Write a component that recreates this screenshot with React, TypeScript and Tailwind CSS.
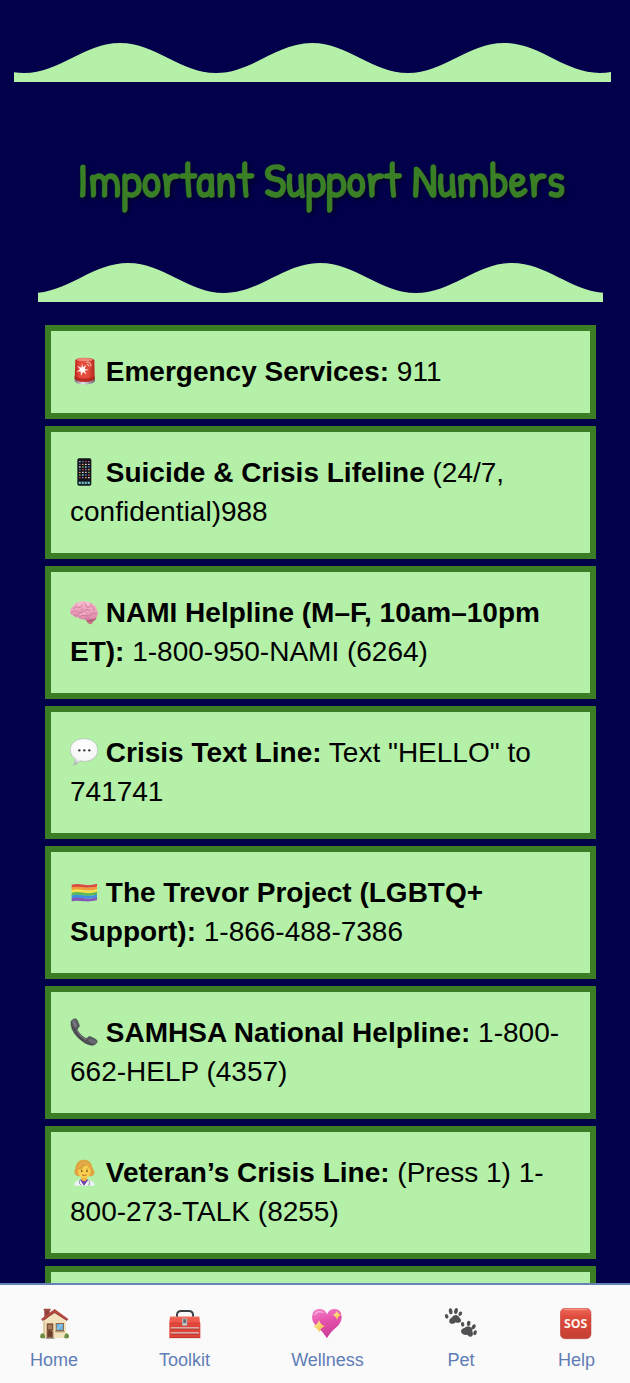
import type { ReactNode } from "react";

const WAVE_HALF = 96;

/* A row of rolling hills; `start` is the x of the first trough. */
function Wave({ start, width }: { start: number; width: number }) {
  let d = `M${start} 30`;
  let x = start;
  let up = true;
  while (x < width) {
    const from = up ? 30 : 0;
    const to = up ? 0 : 30;
    d += ` C${x + 36} ${from} ${x + WAVE_HALF - 36} ${to} ${x + WAVE_HALF} ${to}`;
    x += WAVE_HALF;
    up = !up;
  }
  d += ` V39 H${start} Z`;
  return (
    <svg viewBox={`0 0 ${width} 39`} preserveAspectRatio="none" className="block h-[39px] w-full" aria-hidden="true">
      <path d={d} fill="#b4f0a8" />
    </svg>
  );
}

function CardIcon({ children }: { children: ReactNode }) {
  return (
    <svg viewBox="0 0 84 84" className="inline-block h-7 w-7 align-[-4px]" aria-hidden="true">
      {children}
    </svg>
  );
}

const Siren = () => (
  <CardIcon>
    <defs>
      <linearGradient id="siren" x1="0" x2="1">
        <stop offset="0" stopColor="#b8231b" />
        <stop offset=".25" stopColor="#e8483b" />
        <stop offset=".7" stopColor="#e14a38" />
        <stop offset="1" stopColor="#b5251c" />
      </linearGradient>
      <linearGradient id="sirenBase" x1="0" x2="1">
        <stop offset="0" stopColor="#77747c" />
        <stop offset=".4" stopColor="#e4e2e6" />
        <stop offset="1" stopColor="#6d6a72" />
      </linearGradient>
    </defs>
    <path d="M14 64 Q44 76 75 64 V73 Q68 83 44 83 Q20 83 14 73Z" fill="url(#sirenBase)" />
    <path d="M16 10 Q17 2 44 2 Q71 2 73 10 L74 64 Q68 74 44 74 Q20 74 14 64Z" fill="url(#siren)" />
    <ellipse cx="44" cy="8" rx="24" ry="5" fill="#ee8a7b" />
    <path d="M14 58 Q44 72 74 58 V65 Q68 75 44 75 Q20 75 14 65Z" fill="#a81e1b" opacity=".7" />
    <path d="M36 18 L39 31 L49 23 L44 35 L57 39 L44 41 L50 53 L39 45 L33 57 L32 43 L19 44 L30 37 L21 26 L34 32Z" fill="#fff0ea" />
    <path d="M49 15 Q63 14 63 28 M51 22 Q57 22 57 28" stroke="#ffd5cc" strokeWidth="3" fill="none" />
    <circle cx="37" cy="38" r="7" fill="#fff" opacity=".7" />
  </CardIcon>
);

const APP_COLORS = ["#8fd4ef", "#e8e8ea", "#c34b52", "#6fb36b", "#e5a24a", "#5577c9", "#d8d2c4", "#9b6fb8"];

const Mobile = () => (
  <CardIcon>
    <rect x="22" y="1" width="42" height="82" rx="5" fill="#14141a" />
    {Array.from({ length: 28 }, (_, i) => (
      <rect
        key={i}
        x={27 + (i % 4) * 9}
        y={9 + Math.floor(i / 4) * 8}
        width="5"
        height="4"
        rx="1.5"
        fill={APP_COLORS[(i * 5 + Math.floor(i / 4) * 3) % 8]}
      />
    ))}
    <rect x="25" y="70" width="36" height="9" rx="2" fill="#28505f" />
    {[27, 36, 45, 54].map((x) => (
      <rect key={x} x={x} y="72" width="5" height="5" rx="1.5" fill="#8fe0da" />
    ))}
  </CardIcon>
);

const Brain = () => (
  <CardIcon>
    <defs>
      <linearGradient id="brain" x1="0" y1="0" x2="0" y2="1">
        <stop offset="0" stopColor="#f9bdd0" />
        <stop offset="1" stopColor="#de87a8" />
      </linearGradient>
    </defs>
    <path d="M48 66 Q54 80 63 79 Q70 76 68 66Z" fill="#c77a86" />
    <path d="M45 60 Q48 74 64 72 Q80 68 79 56Z" fill="#b8607f" />
    <path
      d="M1 44 Q0 31 9 25 Q13 14 27 13 Q37 6 49 11 Q62 10 69 19 Q79 23 80 35 Q87 45 81 55 Q75 66 64 62 Q53 69 43 64 Q31 67 26 58 Q13 60 11 53 Q2 51 1 44Z"
      fill="url(#brain)"
    />
    <path
      d="M10 31 Q18 23 27 28 Q35 30 37 20 M5 43 Q16 34 24 43 Q34 48 43 38 Q50 31 59 37 M27 58 Q34 48 46 53 Q57 57 65 49 Q72 42 79 46 M42 14 Q49 17 48 26 Q54 31 63 25 M62 16 Q60 22 68 26 Q75 30 71 37 M20 17 Q22 22 18 25 M13 52 Q18 47 25 51 M44 63 Q53 61 58 62 M39 31 Q32 33 33 39"
      stroke="#c4698e"
      strokeWidth="2"
      strokeLinecap="round"
      fill="none"
    />
    <path d="M14 23 Q20 17 28 19 M51 16 Q57 16 60 20 M30 51 Q39 46 47 48" stroke="#fbd3df" strokeWidth="2" fill="none" />
  </CardIcon>
);

const Speech = () => (
  <CardIcon>
    <defs>
      <radialGradient id="speech" cx=".5" cy=".3" r=".7">
        <stop offset="0" stopColor="#fff" />
        <stop offset=".75" stopColor="#f6f6f8" />
        <stop offset="1" stopColor="#b4b4be" />
      </radialGradient>
    </defs>
    <path
      d="M42 2 C66 2 83 16 83 36 C83 57 66 70 43 70 Q36 70 30 68 Q23 79 9 82 Q17 74 16 62 Q1 53 1 36 C1 16 18 2 42 2Z"
      fill="url(#speech)"
      stroke="#a9acb0"
      strokeWidth="1.5"
    />
    <g fill="#33333a">
      <circle cx="28" cy="37" r="3.5" />
      <circle cx="43" cy="37" r="3.5" />
      <circle cx="58" cy="37" r="3.5" />
    </g>
  </CardIcon>
);

const FLAG = ["#dc4b42", "#f09a3e", "#f7e04d", "#5cb85c", "#3f8fe0", "#8458b8"];

const Flag = () => (
  <CardIcon>
    {FLAG.map((color, i) => {
      const y = 20 + i * 8.2;
      return (
        <path
          key={color}
          d={`M5 ${y} C19 ${y - 4} 29 ${y - 2} 43 ${y} S69 ${y} 81 ${y - 3} v9 C69 ${y + 9} 56 ${y + 10} 43 ${y + 9} S19 ${y + 5} 5 ${y + 9}Z`}
          fill={color}
        />
      );
    })}
  </CardIcon>
);

const Receiver = () => (
  <CardIcon>
    <defs>
      <linearGradient id="receiver" x1="0" y1="1" x2="1" y2="0">
        <stop offset="0" stopColor="#2e2f34" />
        <stop offset=".55" stopColor="#5e5f66" />
        <stop offset="1" stopColor="#85868d" />
      </linearGradient>
    </defs>
    <path
      d="M3 10 Q8 2 16 2 Q20 2 23 9 L28 22 Q29 27 24 30 Q20 33 23 38 Q32 53 45 60 Q50 63 53 59 Q57 54 62 56 L77 64 Q84 68 81 73 Q76 83 64 82 Q44 79 23 58 Q0 34 3 10Z"
      fill="url(#receiver)"
      stroke="#35363b"
      strokeWidth="1.5"
    />
    <path d="M19 35 Q29 55 48 66" stroke="#8a8b92" strokeWidth="2.5" fill="none" />
    <ellipse cx="14" cy="18" rx="5" ry="12" transform="rotate(-22 14 18)" fill="#77787f" />
    <ellipse cx="66" cy="70" rx="12" ry="5" transform="rotate(22 66 70)" fill="#6a6b72" />
  </CardIcon>
);

const Doctor = () => (
  <CardIcon>
    <path d="M22 55 Q10 48 14 36 Q17 27 18 22 Q24 4 43 5 Q63 6 66 25 Q68 31 73 40 Q76 50 65 55Z" fill="#dda441" />
    <path d="M12 83 Q13 70 27 66 L42 63 L58 66 Q73 70 74 83Z" fill="#eef1f5" />
    <path d="M30 65 L42 83 L55 65 Q42 59 30 65Z" fill="#6b3fa8" />
    <path d="M34 52 H51 V65 Q42 74 34 65Z" fill="#eeb23c" />
    <ellipse cx="43" cy="38" rx="19" ry="23" fill="#fbcf4e" />
    <path d="M22 38 Q20 16 42 10 Q64 12 64 38 Q56 29 48 20 Q38 30 22 38Z" fill="#e3aa48" />
    <path d="M48 19 Q38 27 25 33" stroke="#c98e34" strokeWidth="2" fill="none" />
    <circle cx="35" cy="39" r="2.6" fill="#4b3322" />
    <circle cx="51" cy="39" r="2.6" fill="#4b3322" />
    <path d="M31 34 Q35 32 38 34 M48 34 Q52 32 55 34" stroke="#9a6a2b" strokeWidth="1.6" fill="none" />
    <path d="M37 51 Q43 55 49 51" stroke="#b04a35" strokeWidth="2.6" fill="none" strokeLinecap="round" />
    <path d="M28 67 Q26 78 34 82 M56 67 Q62 73 57 80" stroke="#76808e" strokeWidth="2.4" fill="none" />
    <circle cx="57" cy="80" r="2.5" fill="#a8b0ba" />
  </CardIcon>
);

function NavIcon({ children }: { children: ReactNode }) {
  return (
    <svg viewBox="0 0 96 96" className="block h-8 w-8" aria-hidden="true">
      {children}
    </svg>
  );
}

const House = () => (
  <NavIcon>
    <rect x="19" y="4" width="16" height="34" fill="#8e403a" />
    <rect x="17" y="2" width="21" height="6" rx="1" fill="#a34c44" />
    <path d="M16 40 L50 10 L84 40 V90 H16Z" fill="#f3e3bd" />
    <path d="M16 40 L21 36 V90 H16Z" fill="#d9c59a" />
    <path d="M50 3 L91 33 L87 38 L50 14 L13 38 L9 33Z" fill="#b54a42" />
    <path d="M13 38 L50 14 L87 38" stroke="#7f2d2b" strokeWidth="2" fill="none" />
    <rect x="26" y="46" width="20" height="45" fill="#84553a" />
    <rect x="30" y="51" width="12" height="12" fill="#a5795a" />
    <path d="M30 68 h12 v18 h-12Z" fill="#6b412c" />
    <circle cx="43" cy="69" r="1.6" fill="#efcf7a" />
    <rect x="53" y="45" width="25" height="25" fill="#8a6a4e" />
    <rect x="56" y="48" width="19" height="18" fill="#6fb1dd" />
    <path d="M57 64 L71 49" stroke="#b8dcf2" strokeWidth="3" />
    <rect x="51" y="69" width="29" height="4" fill="#b59a75" />
    <path d="M6 88 Q7 76 14 76 Q22 78 21 90 Q11 93 6 88Z M79 90 Q78 78 86 76 Q94 78 93 88 Q90 93 79 90Z" fill="#6f8e45" />
    <rect x="23" y="89" width="26" height="4" fill="#a3a09a" />
  </NavIcon>
);

const Toolbox = () => (
  <NavIcon>
    <path d="M24 27 V20 Q25 9 36 9 H60 Q71 9 72 20 V27" stroke="#3c4145" strokeWidth="6" fill="none" />
    <path d="M3 26 H91 L93 46 H1Z" fill="#ee5a4c" />
    <rect x="1" y="43" width="93" height="47" rx="2" fill="#df4538" />
    <path d="M3 27 H91" stroke="#f58a7b" strokeWidth="2.5" />
    <rect x="5" y="58" width="85" height="4" fill="#dedbdb" />
    <rect x="5" y="62" width="85" height="2" fill="#97312b" />
    <rect x="5" y="73" width="85" height="4" fill="#dedbdb" />
    <rect x="5" y="77" width="85" height="2" fill="#97312b" />
    <rect x="39" y="31" width="16" height="22" rx="2" fill="#aeb0b2" />
    <rect x="43" y="34" width="8" height="10" rx="1" fill="#65696d" />
    <path d="M42 49 h10" stroke="#ededee" strokeWidth="2" />
    <path d="M1 89 H94" stroke="#a72c25" strokeWidth="2" />
  </NavIcon>
);

const Heart = () => (
  <NavIcon>
    <defs>
      <linearGradient id="heart" x1=".3" y1="0" x2=".6" y2="1">
        <stop offset="0" stopColor="#f27cc4" />
        <stop offset=".4" stopColor="#e653ae" />
        <stop offset="1" stopColor="#c83a94" />
      </linearGradient>
      <linearGradient id="star" x1="0" y1="0" x2="1" y2="1">
        <stop offset="0" stopColor="#fff0a0" />
        <stop offset="1" stopColor="#f0b93a" />
      </linearGradient>
    </defs>
    <path d="M48 91 Q38 73 19 57 Q3 43 3 26 Q4 4 25 3 Q42 3 48 19 Q54 3 71 3 Q91 4 92 26 Q92 43 77 57 Q57 73 48 91Z" fill="url(#heart)" />
    <path d="M9 25 Q11 9 25 8 Q35 8 40 16 Q25 10 17 17 Q11 22 9 25Z" fill="#f9b4de" opacity=".8" />
    <path d="M78 7 Q80 18 91 21 Q80 24 78 37 Q75 24 65 21 Q75 18 78 7Z" fill="url(#star)" />
    <path d="M24 36 Q28 51 42 55 Q28 59 24 74 Q20 59 5 55 Q20 51 24 36Z" fill="url(#star)" />
  </NavIcon>
);

const Paws = () => (
  <NavIcon>
    <g fill="#505052">
      <path d="M13 43 Q11 33 20 29 Q24 20 34 21 Q42 23 45 31 Q52 39 45 43 Q38 46 32 43 Q26 49 18 47 Q14 46 13 43Z" />
      <ellipse cx="5" cy="25" rx="5" ry="7" transform="rotate(-22 5 25)" />
      <ellipse cx="17" cy="10" rx="5.5" ry="9" transform="rotate(-8 17 10)" />
      <ellipse cx="33" cy="9" rx="5.5" ry="9" transform="rotate(12 33 9)" />
      <ellipse cx="46" cy="17" rx="5" ry="7" transform="rotate(32 46 17)" />
      <path d="M48 70 Q48 63 58 60 Q67 52 76 57 Q84 61 82 69 Q87 84 78 86 Q72 88 67 80 Q59 82 53 78 Q48 75 48 70Z" />
      <ellipse cx="53" cy="49" rx="5" ry="7" transform="rotate(-12 53 49)" />
      <ellipse cx="71" cy="46" rx="5.5" ry="8" transform="rotate(10 71 46)" />
      <ellipse cx="86" cy="56" rx="5.5" ry="8" transform="rotate(34 86 56)" />
      <ellipse cx="90" cy="74" rx="5" ry="7.5" transform="rotate(18 90 74)" />
    </g>
  </NavIcon>
);

const Sos = () => (
  <NavIcon>
    <defs>
      <linearGradient id="sos" x1="0" y1="0" x2="0" y2="1">
        <stop offset="0" stopColor="#f0685a" />
        <stop offset=".3" stopColor="#dd4b3c" />
        <stop offset="1" stopColor="#c43f33" />
      </linearGradient>
    </defs>
    <rect x="1" y="1" width="92" height="91" rx="14" fill="url(#sos)" stroke="#b8392e" strokeWidth="1.5" />
    <path d="M14 4 H80" stroke="#f7a095" strokeWidth="3" strokeLinecap="round" />
    <text x="47" y="60" textAnchor="middle" fontFamily="Open Sans, sans-serif" fontWeight="700" fontSize="37" fill="#fff3ee">
      SOS
    </text>
  </NavIcon>
);

const contacts = [
  { icon: <Siren />, name: "Emergency Services:", detail: "911" },
  { icon: <Mobile />, name: "Suicide & Crisis Lifeline", detail: "(24/7, confidential)988" },
  { icon: <Brain />, name: "NAMI Helpline (M–F, 10am–10pm ET):", detail: "1-800-950-NAMI (6264)" },
  { icon: <Speech />, name: "Crisis Text Line:", detail: 'Text "HELLO" to 741741' },
  { icon: <Flag />, name: "The Trevor Project (LGBTQ+ Support):", detail: "1-866-488-7386" },
  { icon: <Receiver />, name: "SAMHSA National Helpline:", detail: "1-800-662-HELP (4357)" },
  { icon: <Doctor />, name: "Veteran’s Crisis Line:", detail: "(Press 1) 1-800-273-TALK (8255)" },
];

const tabs = [
  { icon: <House />, label: "Home" },
  { icon: <Toolbox />, label: "Toolkit" },
  { icon: <Heart />, label: "Wellness" },
  { icon: <Paws />, label: "Pet" },
  { icon: <Sos />, label: "Help" },
];

const card = "border-6 border-[#3a7d24] bg-[#b4f0a8] px-[19px] pt-[21px] pb-[22px]";

export default function App() {
  return (
    <div className="flex h-dvh flex-col bg-[#02004b] font-['Liberation_Sans',Arial,sans-serif]">
      <main className="min-h-0 flex-1 overflow-y-auto pt-[43px] [scrollbar-width:none]">
        <div className="mr-[19px] ml-[14px]">
          <Wave start={-182} width={597} />
        </div>
        <h1 className="pt-[70px] pb-[55px] pl-3 text-center font-['Patrick_Hand','Lato',sans-serif] text-[48px] leading-[56px] font-bold text-[#3a7f26] [text-shadow:2px_2px_4px_rgba(0,0,0,0.5)]">
          Important Support Numbers
        </h1>
        <div className="mr-[27px] ml-[38px]">
          <Wave start={-198} width={565} />
        </div>
        <ul className="mt-[23px] mr-[34px] ml-[45px] flex flex-col gap-[7px] text-[28px] leading-[39px] text-black">
          {contacts.map((c) => (
            <li key={c.name} className={card}>
              {c.icon} <strong className="font-bold">{c.name}</strong> {c.detail}
            </li>
          ))}
          <li className={card}>
            <div className="h-[78px]" />
          </li>
        </ul>
      </main>
      <nav className="flex h-[100px] shrink-0 items-start justify-between border-t-2 border-[#6482b8] bg-[#fafafa] pt-[23px] pr-[35px] pl-[30px] text-lg leading-6 text-[#5f7db5]">
        {tabs.map((t) => (
          <a key={t.label} href={`#${t.label.toLowerCase()}`} className="flex flex-col items-center gap-2">
            {t.icon}
            <span>{t.label}</span>
          </a>
        ))}
      </nav>
    </div>
  );
}
